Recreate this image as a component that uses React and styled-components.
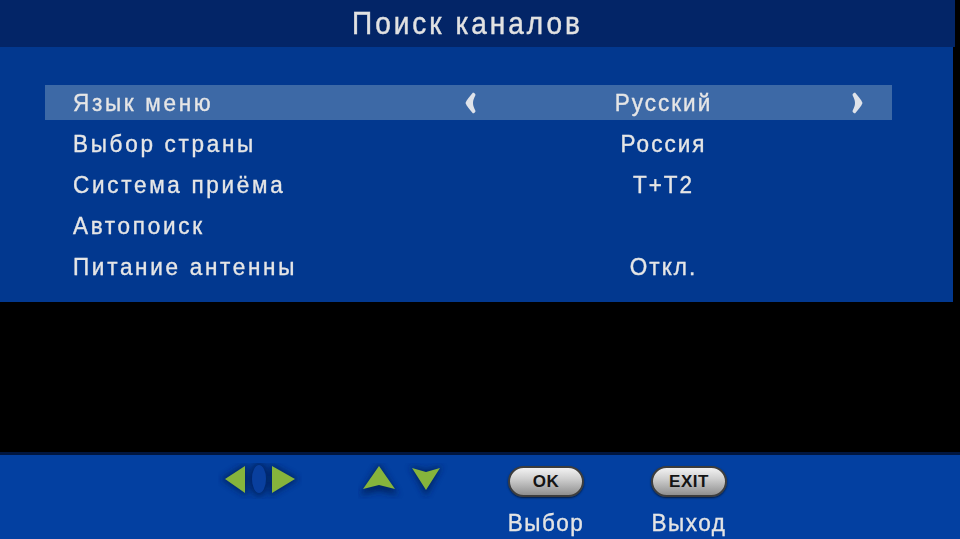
import React from 'react';
import styled, { createGlobalStyle } from 'styled-components';

const GlobalStyle = createGlobalStyle`
  html, body {
    margin: 0;
    padding: 0;
    background: #000;
  }
  body {
    font-family: "Liberation Sans", Arial, sans-serif;
  }
`;

const Screen = styled.div`
  width: 960px;
  height: 539px;
  display: flex;
  flex-direction: column;
  background: #000;
  overflow: hidden;
  color: #e6e6e6;
`;

const Header = styled.div`
  height: 47px;
  width: 955px;
  background: #032567;
  display: flex;
  align-items: center;
  justify-content: center;
`;

const Title = styled.h1`
  margin: 0 20px 0 0;
  font-size: 28px;
  font-weight: normal;
  letter-spacing: 3px;
  color: #e2e2e2;
  transform: scaleY(1.1);
  -webkit-text-stroke: 0.4px #e2e2e2;
`;

const Panel = styled.div`
  width: 953px;
  height: 255px;
  background: #02388f;
  box-sizing: border-box;
  padding-top: 38px;
  display: flex;
  flex-direction: column;
  gap: 6px;
`;

const Row = styled.div`
  margin-left: 45px;
  width: 847px;
  height: 35px;
  display: grid;
  grid-template-columns: 410px 30px 357px 30px 20px;
  align-items: center;
  background: ${({ active }) => (active ? '#3d69a6' : 'transparent')};
`;

const Label = styled.span`
  padding-left: 28px;
  font-size: 22.5px;
  letter-spacing: 2.7px;
  transform: scaleY(1.08);
  transform-origin: left center;
  -webkit-text-stroke: 0.35px #e6e6e6;
  white-space: nowrap;
`;

const Value = styled.span`
  grid-column: 3;
  text-align: center;
  font-size: 22.5px;
  letter-spacing: 2px;
  transform: scaleY(1.08);
  -webkit-text-stroke: 0.35px #e6e6e6;
`;

const Chevron = styled.svg`
  grid-column: ${({ col }) => col};
  justify-self: center;
  width: 11px;
  height: 22px;
`;

const Gap = styled.div`
  flex: 1;
  background: #000;
`;

const Footer = styled.div`
  height: 87px;
  background: #0340a1;
  border-top: 3px solid #01163f;
  box-sizing: border-box;
`;

const KeyGroup = styled.div`
  display: flex;
  align-items: flex-start;
  padding-left: 218px;
  padding-top: 8px;
`;

const IconSlot = styled.div`
  width: ${({ w }) => w}px;
  margin-right: ${({ mr }) => mr}px;
  display: flex;
  justify-content: center;
`;

const KeyCol = styled.div`
  width: 78px;
  margin-right: ${({ mr }) => mr}px;
  padding-top: 3px;
  display: flex;
  flex-direction: column;
  align-items: center;
  gap: 13px;
`;

const Pill = styled.div`
  width: 76px;
  height: 31px;
  border-radius: 16px;
  box-sizing: border-box;
  border: 2px solid #3d3d3d;
  background: linear-gradient(180deg, #f2f2f2 0%, #cfcfcf 40%, #8f8f8f 100%);
  display: flex;
  align-items: center;
  justify-content: center;
  font-size: 17px;
  font-weight: bold;
  color: #141414;
  letter-spacing: 0.5px;
  box-shadow: 0 1px 2px rgba(0, 0, 0, 0.6);
`;

const KeyText = styled.span`
  font-size: 22.5px;
  letter-spacing: 1.5px;
  color: #e4e4e4;
  transform: scaleY(1.1);
  -webkit-text-stroke: 0.35px #e4e4e4;
`;

const rows = [
  { label: 'Язык меню', value: 'Русский', active: true },
  { label: 'Выбор страны', value: 'Россия' },
  { label: 'Система приёма', value: 'T+T2' },
  { label: 'Автопоиск', value: '' },
  { label: 'Питание антенны', value: 'Откл.' },
];

const LeftRightIcon = () => (
  <svg width="84" height="36" viewBox="0 0 84 36">
    <defs>
      <filter id="glowLR" x="-30%" y="-30%" width="160%" height="160%">
        <feGaussianBlur stdDeviation="3" />
      </filter>
    </defs>
    <g fill="#062460" filter="url(#glowLR)" opacity="0.9">
      <polygon points="3,16 29,0 29,33" />
      <polygon points="81,16 52,0 52,33" />
      <ellipse cx="41" cy="16" rx="10" ry="17" />
    </g>
    <ellipse cx="41" cy="16" rx="7" ry="14" fill="#093f9e" />
    <polygon points="7,16 27,3 27,30" fill="#86b43c" />
    <polygon points="77,16 54,3 54,30" fill="#86b43c" />
  </svg>
);

const UpDownIcon = () => (
  <svg width="90" height="36" viewBox="0 0 90 36">
    <defs>
      <filter id="glowUD" x="-30%" y="-30%" width="160%" height="160%">
        <feGaussianBlur stdDeviation="3" />
      </filter>
    </defs>
    <g fill="#062460" filter="url(#glowUD)" opacity="0.9">
      <polygon points="21,0 2,32 21,28 40,32" />
      <polygon points="52,3 68,7 84,3 68,33" />
    </g>
    <polygon points="21,3 5,26 21,22 37,26" fill="#86b43c" />
    <polygon points="54,5 68,9 82,5 68,27" fill="#86b43c" />
  </svg>
);

const App = () => (
  <>
    <GlobalStyle />
    <Screen>
      <Header>
        <Title>Поиск каналов</Title>
      </Header>
      <Panel>
        {rows.map((r) => (
          <Row key={r.label} active={r.active}>
            <Label>{r.label}</Label>
            {r.active && (
              <Chevron col={2} viewBox="0 0 11 22">
                <path d="M8 0.5 C5 4 1.5 8 0.5 11 C1.5 14 5 18 8 21.5 C9.5 21 10.5 20 10.5 19 C9 16 8 13.5 8 11 C8 8.5 9 6 10.5 3 C10.5 2 9.5 1 8 0.5 Z" fill="#dfe3ea" />
              </Chevron>
            )}
            <Value>{r.value}</Value>
            {r.active && (
              <Chevron col={4} viewBox="0 0 11 22">
                <path d="M3 0.5 C6 4 9.5 8 10.5 11 C9.5 14 6 18 3 21.5 C1.5 21 0.5 20 0.5 19 C2 16 3 13.5 3 11 C3 8.5 2 6 0.5 3 C0.5 2 1.5 1 3 0.5 Z" fill="#dfe3ea" />
              </Chevron>
            )}
          </Row>
        ))}
      </Panel>
      <Gap />
      <Footer>
        <KeyGroup>
          <IconSlot w={84} mr={56}>
            <LeftRightIcon />
          </IconSlot>
          <IconSlot w={90} mr={59}>
            <UpDownIcon />
          </IconSlot>
          <KeyCol mr={65}>
            <Pill>OK</Pill>
            <KeyText>Выбор</KeyText>
          </KeyCol>
          <KeyCol mr={0}>
            <Pill>EXIT</Pill>
            <KeyText>Выход</KeyText>
          </KeyCol>
        </KeyGroup>
      </Footer>
    </Screen>
  </>
);

export default App;
